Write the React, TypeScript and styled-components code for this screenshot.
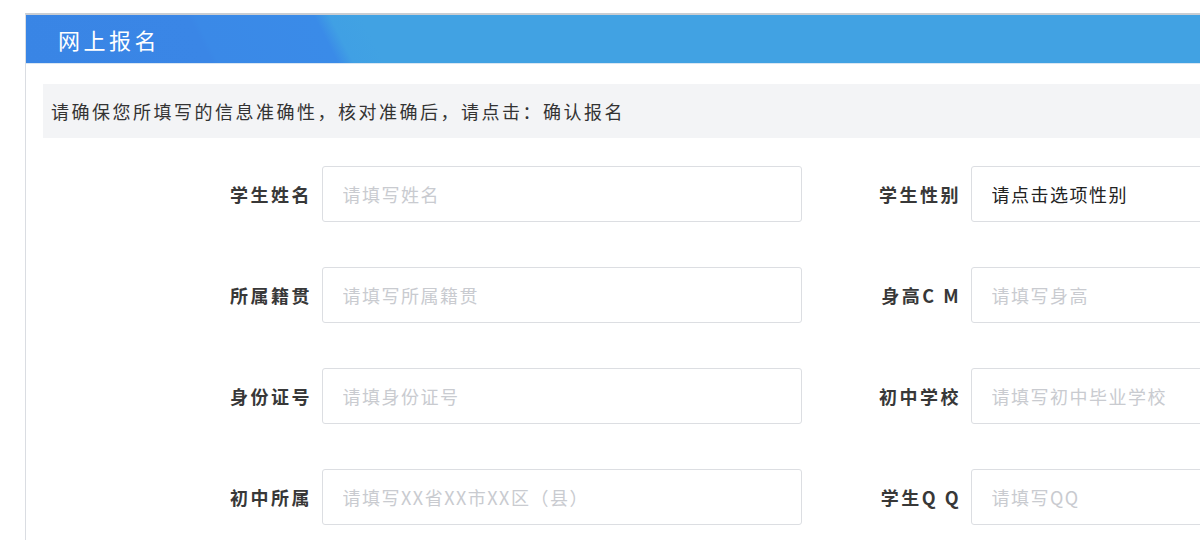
import styled, { createGlobalStyle } from "styled-components";

const GlobalStyle = createGlobalStyle`
  html, body {
    margin: 0;
    padding: 0;
    background: #ffffff;
    overflow: hidden;
  }
  body {
    font-family: "Noto Sans CJK SC", "Noto Sans", "Liberation Sans", sans-serif;
    color: #333333;
  }
  * {
    box-sizing: border-box;
  }
`;

const Page = styled.div`
  width: 1200px;
  height: 540px;
  overflow: hidden;
  padding: 13px 0 0 25px;
`;

const Panel = styled.section`
  width: 1300px;
  height: 600px;
  border-top: 2px solid #c9cdd2;
  border-left: 1px solid #dadde2;
  background: #ffffff;
`;

// header band: darker blue on the left with two soft diagonal edges
const Header = styled.div`
  height: 49px;
  display: flex;
  align-items: center;
  padding-left: 32px;
  border-bottom: 1px solid #d9e6f2;
  background: linear-gradient(
    63deg,
    #3985e5 0px,
    #3a86e6 166px,
    #3a89e7 172px,
    #3a8be8 278px,
    #40a0e4 292px,
    #41a2e3 320px,
    #41a2e3 100%
  );
`;

const Title = styled.h1`
  margin: 0;
  font-size: 22px;
  font-weight: 400;
  letter-spacing: 3.5px;
  color: #ffffff;
`;

const Notice = styled.div`
  margin: 20px 0 0 17px;
  height: 54px;
  display: flex;
  align-items: center;
  padding-left: 8px;
  background: #f3f4f6;
  font-size: 18px;
  letter-spacing: 2.5px;
  color: #333333;
`;

const Form = styled.form`
  margin: 28px 0 0 136px;
  display: grid;
  grid-template-columns: repeat(2, 649px);
  row-gap: 45px;
`;

const Field = styled.label`
  display: flex;
  align-items: center;
  gap: 12px;
`;

const FieldName = styled.span`
  width: 150px;
  text-align: right;
  font-size: 18px;
  font-weight: 700;
  letter-spacing: 2.5px;
  margin-right: -2.5px;
  color: #383838;
  white-space: pre;
`;

const boxStyle = `
  width: 480px;
  height: 56px;
  padding: 0 20px;
  border: 1px solid #dcdee2;
  border-radius: 3px;
  background: #ffffff;
  font-family: "Noto Sans CJK SC", "Noto Sans", "Liberation Sans", sans-serif;
  font-size: 18px;
  letter-spacing: 1.5px;
  outline: none;
`;

const TextBox = styled.input`
  ${boxStyle}
  color: #333333;
  &::placeholder {
    color: #c9cbd0;
  }
`;

const Choice = styled.select`
  ${boxStyle}
  appearance: none;
  color: #222222;
`;

type FieldDef = { name: string; hint: string; select?: boolean };

const fields: FieldDef[] = [
  { name: "学生姓名", hint: "请填写姓名" },
  { name: "学生性别", hint: "请点击选项性别", select: true },
  { name: "所属籍贯", hint: "请填写所属籍贯" },
  { name: "身高C M", hint: "请填写身高" },
  { name: "身份证号", hint: "请填身份证号" },
  { name: "初中学校", hint: "请填写初中毕业学校" },
  { name: "初中所属", hint: "请填写XX省XX市XX区（县）" },
  { name: "学生Q Q", hint: "请填写QQ" },
];

export default function App() {
  return (
    <>
      <GlobalStyle />
      <Page>
        <Panel>
          <Header>
            <Title>网上报名</Title>
          </Header>
          <Notice>请确保您所填写的信息准确性，核对准确后，请点击：确认报名</Notice>
          <Form onSubmit={(e) => e.preventDefault()}>
            {fields.map((f) => (
              <Field key={f.name}>
                <FieldName>{f.name}</FieldName>
                {f.select ? (
                  <Choice defaultValue="">
                    <option value="">{f.hint}</option>
                    <option value="男">男</option>
                    <option value="女">女</option>
                  </Choice>
                ) : (
                  <TextBox placeholder={f.hint} />
                )}
              </Field>
            ))}
          </Form>
        </Panel>
      </Page>
    </>
  );
}
